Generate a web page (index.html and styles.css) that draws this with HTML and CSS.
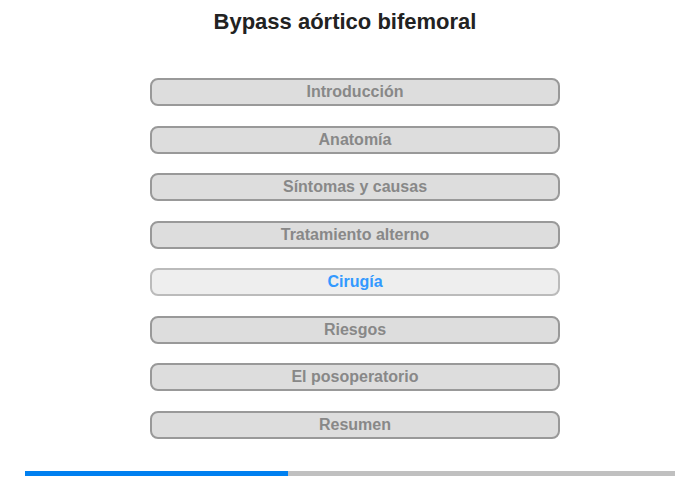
FILE: index.html
```
<html>
  <head>
    <link rel="stylesheet" href="styles.css">
  </head>
  <body>
    <div class="page">
      <h1 class="title">Bypass aórtico bifemoral</h1>
      <div class="menu">
        <div class="item">Introducción</div>
        <div class="item">Anatomía</div>
        <div class="item">Síntomas y causas</div>
        <div class="item">Tratamiento alterno</div>
        <div class="item active">Cirugía</div>
        <div class="item">Riesgos</div>
        <div class="item">El posoperatorio</div>
        <div class="item">Resumen</div>
      </div>
      <div class="progress"><div class="progress-fill"></div></div>
    </div>
  </body>
</html>
```

FILE: styles.css
```
body { margin:0;background:#fff;font-family:"Liberation Sans", Arial, sans-serif; }
.page { width:700px;height:480px;display:flex;flex-direction:column;align-items:center; }
.title { margin:9px 10px 0 0;height:26px;line-height:26px;font-size:22px;font-weight:bold;color:#222; }
.menu { margin:43px 0 0 10px;display:flex;flex-direction:column;gap:19.5px; }
.item { box-sizing:border-box;width:410px;height:28px;border:2px solid #999;border-radius:8px;background:#ddd;color:#888;font-size:16px;font-weight:bold;text-align:center;line-height:24px; }
.item.active { background:#eee;border-color:#bbb;color:#3399ff; }
.progress { margin-top:auto;margin-bottom:4px;width:650px;height:5px;background:#c0c0c0; }
.progress-fill { width:263px;height:100%;background:#0080f0; }
```
